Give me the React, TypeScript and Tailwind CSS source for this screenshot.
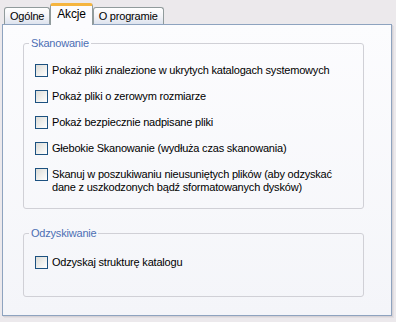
const font = "font-['Liberation_Sans',Arial,sans-serif] tracking-[-0.2px]";

const scanOptions = [
  "Pokaż pliki znalezione w ukrytych katalogach systemowych",
  "Pokaż pliki o zerowym rozmiarze",
  "Pokaż bezpiecznie nadpisane pliki",
  "Głebokie Skanowanie (wydłuża czas skanowania)",
  "Skanuj w poszukiwaniu nieusuniętych plików (aby odzyskać dane z uszkodzonych bądź sformatowanych dysków)",
];

function Check({ label }: { label: string }) {
  return (
    <label className="flex items-start gap-[4px] text-[11px] leading-[13px] text-black">
      <span className="h-[13px] w-[13px] shrink-0 border border-[#1c5180] bg-gradient-to-br from-[#dcdcd7] to-white" />
      <span className="max-w-[290px]">{label}</span>
    </label>
  );
}

function Group({ title, children, className }: { title: string; children: React.ReactNode; className?: string }) {
  return (
    <fieldset className={`w-[341px] rounded-[3px] border border-[#d0d0d6] ${className ?? ""}`}>
      <legend className="-ml-[6px] px-[2px] text-[11px] leading-[13px] text-[#4d6fb4]">{title}</legend>
      {children}
    </fieldset>
  );
}

function Tab({ label, active }: { label: string; active?: boolean }) {
  if (active) {
    return (
      <div className="relative z-10 -mb-px flex h-[22px] items-start rounded-t-[3px] border-x border-t-[3px] border-x-[#919b9c] border-t-[#f5b53f] bg-[#fcfcfe] px-[6px] pt-[1px] text-[12px] leading-[14px]">
        {label}
      </div>
    );
  }
  return (
    <div className="flex h-[17px] items-start rounded-t-[3px] border border-b-0 border-[#919b9c] bg-gradient-to-b from-white via-[#f4f4f8] to-[#dde3ee] px-[5px] pt-[1px] text-[11px] leading-[14px]">
      {label}
    </div>
  );
}

export default function App() {
  return (
    <div className={`h-[322px] w-[396px] bg-[#ece9ec] ${font}`}>
      <div className="flex items-end pl-[4px] pt-[3px]">
        <Tab label="Ogólne" />
        <Tab label="Akcje" active />
        <Tab label="O programie" />
      </div>
      <div className="ml-[2px] h-[292px] w-[390px] border border-[#8ea3bf] bg-gradient-to-b from-[#fcfcfe] to-[#f4f5f9] pl-[20px] pt-[12px] shadow-[1px_1px_0_#d6d2d6,2px_2px_0_#e2dfe2]">
        <Group title="Skanowanie" className="h-[172px] pl-[11px] pt-[14px]">
          <div className="flex flex-col gap-[13px]">
            {scanOptions.map((o) => (
              <Check key={o} label={o} />
            ))}
          </div>
        </Group>
        <Group title="Odzyskiwanie" className="mt-[18px] h-[70px] pl-[11px] pt-[16px]">
          <Check label="Odzyskaj strukturę katalogu" />
        </Group>
      </div>
    </div>
  );
}
